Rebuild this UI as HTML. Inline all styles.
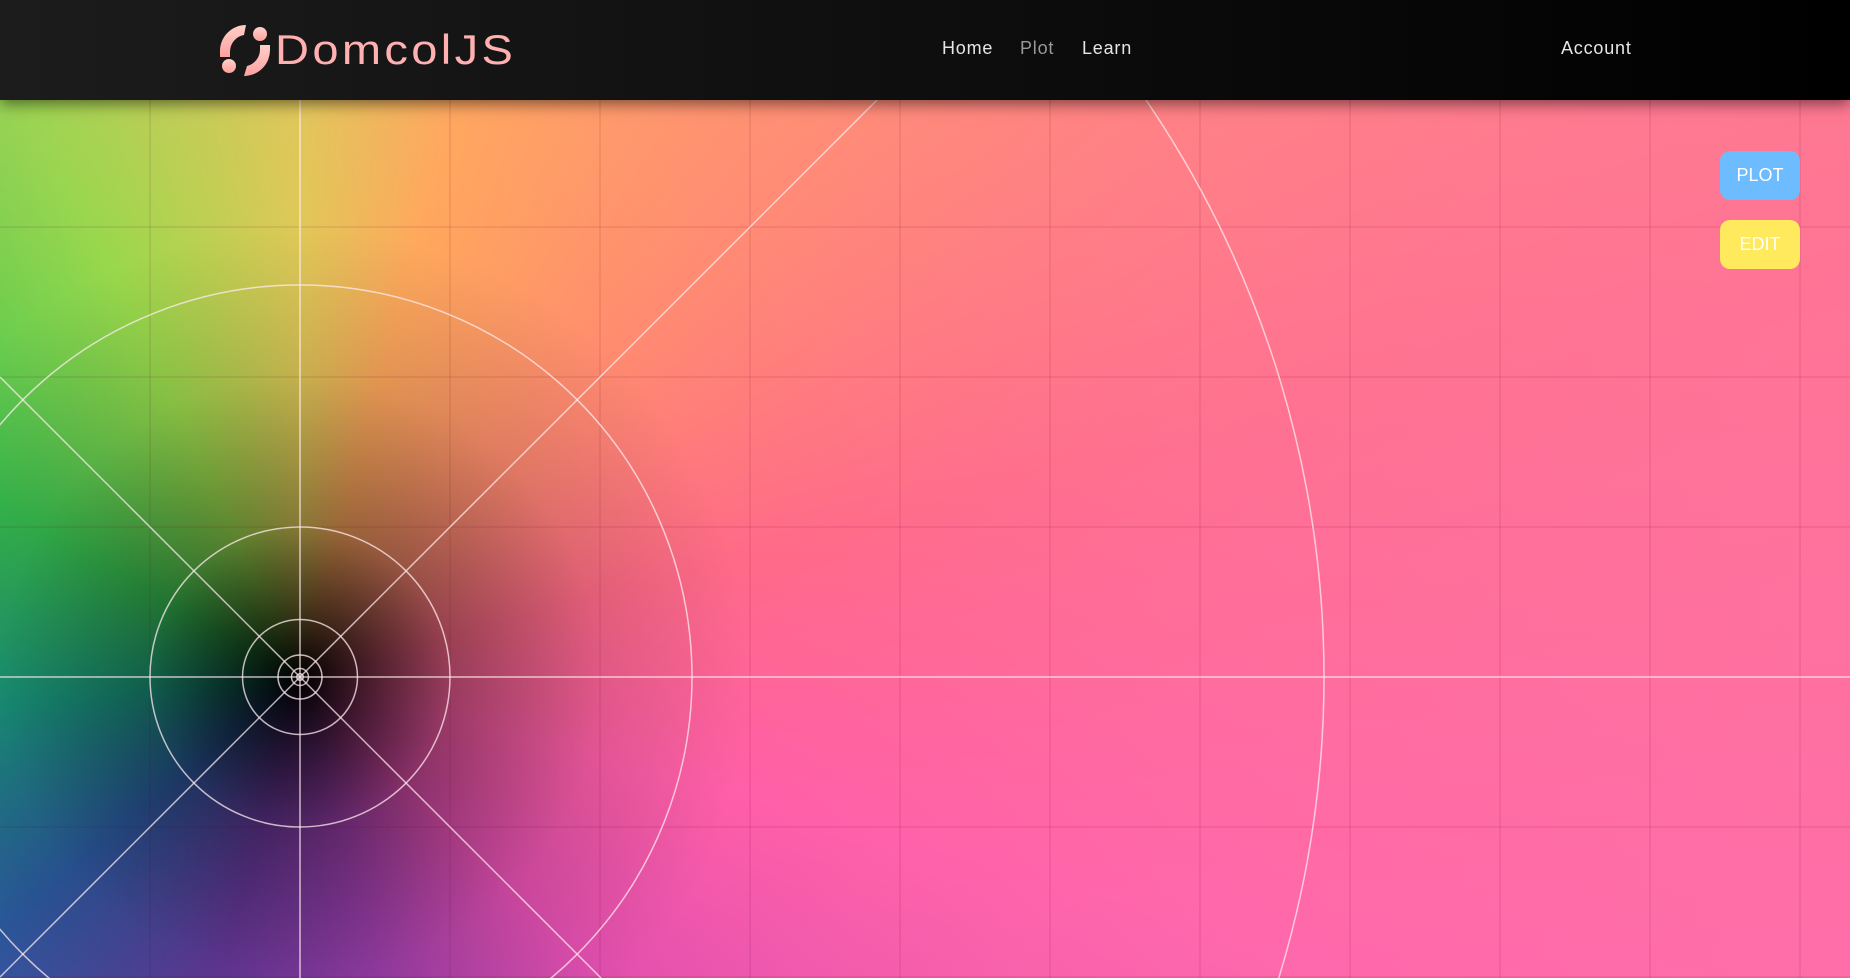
<!DOCTYPE html>
<html><head><meta charset="utf-8"><style>
html,body{margin:0;padding:0;width:1850px;height:978px;overflow:hidden;font-family:"Liberation Sans",sans-serif;position:relative}
.bg{position:absolute;left:0;top:0;width:1850px;height:978px;
background:conic-gradient(from 15deg at 300px 677px,#ffa85c 0deg,#ff8a70 30deg,#ff6a88 60deg,#ff5fa8 90deg,#e24fb0 120deg,#a040b0 150deg,#6a3aa0 180deg,#2c5aa0 215deg,#1a9a80 250deg,#38c050 285deg,#98d84c 320deg,#e0c858 345deg,#ffa85c 360deg);}
.dark{position:absolute;left:0;top:0;width:1850px;height:978px;
background:radial-gradient(circle at 300px 677px,rgba(0,0,0,1) 0px,rgba(0,0,0,0.75) 60px,rgba(0,0,0,0.4) 150px,rgba(0,0,0,0.12) 300px,rgba(0,0,0,0) 450px,rgba(255,150,190,0.15) 900px,rgba(255,140,180,0.3) 1500px);}
nav{position:absolute;left:0;top:0;width:1850px;height:100px;background:linear-gradient(90deg,#1c1c1c,#000);box-shadow:0 4px 14px rgba(0,0,0,0.5);z-index:5}
.logo{position:absolute;left:275px;top:26px;font-size:42px;color:#ffb0b0;letter-spacing:3px;transform:scaleX(1.12);transform-origin:0 0}
.nl{position:absolute;top:38px;font-size:18px;color:#e6e6e6;letter-spacing:0.8px}
.btn{position:absolute;left:1720px;width:80px;height:49px;border-radius:10px;color:#fff;font-size:18px;text-align:center;line-height:49px}
</style></head><body>
<div class="bg"></div><div class="dark"></div>
<svg style="position:absolute;left:0;top:0;overflow:hidden" width="1850" height="978">
<g stroke="rgba(90,0,40,0.11)" stroke-width="1.5">
<line x1="150" y1="0" x2="150" y2="978"/><line x1="450" y1="0" x2="450" y2="978"/><line x1="600" y1="0" x2="600" y2="978"/><line x1="750" y1="0" x2="750" y2="978"/><line x1="900" y1="0" x2="900" y2="978"/><line x1="1050" y1="0" x2="1050" y2="978"/><line x1="1200" y1="0" x2="1200" y2="978"/><line x1="1350" y1="0" x2="1350" y2="978"/><line x1="1500" y1="0" x2="1500" y2="978"/><line x1="1650" y1="0" x2="1650" y2="978"/><line x1="1800" y1="0" x2="1800" y2="978"/>
<line x1="0" y1="227" x2="1850" y2="227"/><line x1="0" y1="377" x2="1850" y2="377"/><line x1="0" y1="527" x2="1850" y2="527"/><line x1="0" y1="827" x2="1850" y2="827"/><line x1="0" y1="977" x2="1850" y2="977"/>
</g>
<g stroke="rgba(255,235,240,0.75)" stroke-width="1.5" fill="none">
<line x1="300" y1="0" x2="300" y2="978"/><line x1="0" y1="677" x2="1850" y2="677"/>
<line x1="0" y1="377" x2="601" y2="978"/><line x1="0" y1="977" x2="900" y2="77"/>
<circle cx="300" cy="677" r="3.3"/><circle cx="300" cy="677" r="8.5"/><circle cx="300" cy="677" r="22"/><circle cx="300" cy="677" r="57.5"/><circle cx="300" cy="677" r="150"/><circle cx="300" cy="677" r="392"/><circle cx="300" cy="677" r="1024"/>
</g></svg>
<nav>
<svg style="position:absolute;left:216px;top:22px" width="58" height="58" viewBox="0 0 58 58">
<defs><linearGradient id="g" x1="0" y1="0" x2="0" y2="1"><stop offset="0" stop-color="#ffd0c8"/><stop offset="1" stop-color="#ffa0a0"/></linearGradient></defs>
<path d="M30 3 A26 26 0 0 0 4 30 L4 35 L14 35 L14 30 A17 17 0 0 1 28 13 Z" fill="url(#g)"/>
<path d="M28 54 A26 26 0 0 0 54 27 L54 23 L44 23 L44 27 A17 17 0 0 1 31 44 Z" fill="url(#g)"/>
<circle cx="44" cy="12" r="7" fill="url(#g)"/><circle cx="13" cy="44" r="7" fill="url(#g)"/>
</svg>
<div class="logo">DomcolJS</div>
<div class="nl" style="left:942px">Home</div>
<div class="nl" style="left:1020px;color:#999">Plot</div>
<div class="nl" style="left:1082px">Learn</div>
<div class="nl" style="left:1561px">Account</div>
</nav>
<div class="btn" style="top:151px;background:#6cbcff">PLOT</div>
<div class="btn" style="top:220px;background:#ffe95c">EDIT</div>
</body></html>
